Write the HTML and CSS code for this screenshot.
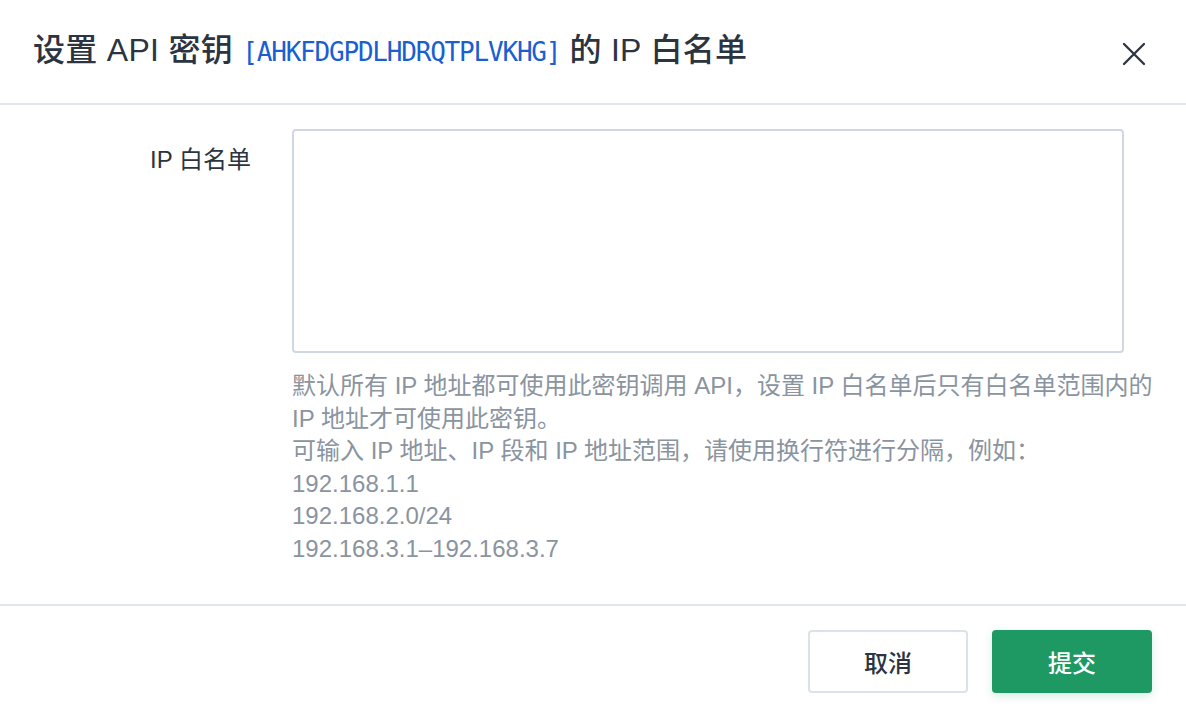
FILE: index.html
```html
<!DOCTYPE html>
<html lang="zh-CN">
<head>
<meta charset="utf-8">
<title>设置 API 密钥 IP 白名单</title>
<link rel="stylesheet" href="styles.css">
</head>
<body>
<div class="dialog">
  <header class="dialog-header">
    <h1 class="dialog-title">设置 API 密钥 <span class="key-code">[AHKFDGPDLHDRQTPLVKHG]</span> 的 IP 白名单</h1>
    <button class="close-btn" aria-label="关闭">
      <svg width="24" height="24" viewBox="0 0 24 24"><path d="M2 2 L22 22 M22 2 L2 22" stroke="#2b3440" stroke-width="2.3" stroke-linecap="round" fill="none"/></svg>
    </button>
  </header>
  <main class="dialog-body">
    <div class="form-row">
      <label class="form-label" for="ipList">IP 白名单</label>
      <div class="form-control">
        <textarea id="ipList" class="ip-textarea"></textarea>
        <div class="help-text">
          <p>默认所有 IP 地址都可使用此密钥调用 API，设置 IP 白名单后只有白名单范围内的<br>IP 地址才可使用此密钥。</p>
          <p>可输入 IP 地址、IP 段和 IP 地址范围，请使用换行符进行分隔，例如：</p>
          <p>192.168.1.1</p>
          <p>192.168.2.0/24</p>
          <p>192.168.3.1–192.168.3.7</p>
        </div>
      </div>
    </div>
  </main>
  <footer class="dialog-footer">
    <button class="btn btn-cancel">取消</button>
    <button class="btn btn-submit">提交</button>
  </footer>
</div>
</body>
</html>
```
FILE: styles.css
```css
* { box-sizing: border-box; }
html, body {
  margin: 0;
  padding: 0;
  background: #ffffff;
}
body {
  font-family: "Liberation Sans", "Noto Sans CJK SC", sans-serif;
  color: #2b3440;
}
.dialog {
  width: 1186px;
  height: 710px;
  display: flex;
  flex-direction: column;
}
.dialog-header {
  height: 105px;
  padding: 0 40px 2px 33px;
  display: flex;
  align-items: center;
  justify-content: space-between;
  border-bottom: 2px solid #e1e7ee;
}
.dialog-title {
  margin: 0;
  font-size: 32px;
  font-weight: 500;
  line-height: 44px;
  color: #2b3440;
  white-space: nowrap;
  letter-spacing: 0.3px;
}
.key-code {
  font-family: "DejaVu Sans Mono", monospace;
  font-weight: 400;
  font-size: 26px;
  color: #1a5fd1;
  letter-spacing: -1.2px;
}
.close-btn {
  background: none;
  border: none;
  padding: 0;
  width: 24px;
  height: 24px;
  margin-top: 6px;
  cursor: pointer;
  display: flex;
}
.dialog-body {
  padding: 24px 0 38px 0;
  border-bottom: 2px solid #e1e7ee;
}
.form-row {
  display: flex;
}
.form-label {
  width: 251px;
  flex-shrink: 0;
  text-align: right;
  padding-top: 14px;
  font-size: 24px;
  line-height: 34px;
  font-weight: 400;
  color: #2b3440;
}
.form-control {
  margin-left: 41px;
  flex: 1;
}
.ip-textarea {
  display: block;
  width: 832px;
  height: 224px;
  border: 2px solid #cfd8e2;
  border-radius: 4px;
  resize: none;
  outline: none;
  margin: 0;
}
.help-text {
  margin-top: 17px;
  font-size: 24px;
  line-height: 32.6px;
  color: #8a949f;
  white-space: nowrap;
}
.help-text p {
  margin: 0;
}
.dialog-footer {
  flex: 1;
  display: flex;
  justify-content: flex-end;
  align-items: flex-start;
  gap: 24px;
  padding: 24px 34px 0 0;
}
.btn {
  width: 160px;
  height: 63px;
  border-radius: 4px;
  font-family: "Liberation Sans", "Noto Sans CJK SC", sans-serif;
  font-size: 24px;
  font-weight: 500;
  cursor: pointer;
}
.btn-cancel {
  background: #ffffff;
  border: 2px solid #dbe2ea;
  color: #2b3440;
}
.btn-submit {
  background: #1e9963;
  border: none;
  color: #ffffff;
  box-shadow: 0 3px 10px rgba(30, 153, 99, 0.18);
}
```
